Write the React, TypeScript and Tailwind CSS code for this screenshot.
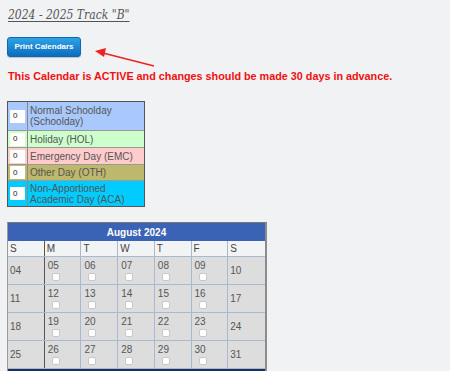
import React from "react";

const legend = [
  { label: ["Normal Schoolday", "(Schoolday)"], bg: "bg-[#a9c9fc]", h: "h-[28px]" },
  { label: ["Holiday (HOL)"], bg: "bg-[#ccffcc]", h: "h-[17px]" },
  { label: ["Emergency Day (EMC)"], bg: "bg-[#ffcccc]", h: "h-[17px]" },
  { label: ["Other Day (OTH)"], bg: "bg-[#bdb86b]", h: "h-[16px]" },
  { label: ["Non-Apportioned", "Academic Day (ACA)"], bg: "bg-[#00ccff]", h: "h-[26px]" },
];

const weeks = [
  ["04", "05", "06", "07", "08", "09", "10"],
  ["11", "12", "13", "14", "15", "16", "17"],
  ["18", "19", "20", "21", "22", "23", "24"],
  ["25", "26", "27", "28", "29", "30", "31"],
];

const dayNames = ["S", "M", "T", "W", "T", "F", "S"];

function colBorder(i: number) {
  if (i === 0) return "border-r border-r-[#555]";
  if (i === 6) return "";
  return "border-r border-r-[#a9b9cf]";
}

export default function App() {
  return (
    <div className="relative min-h-[371px] bg-[#f1f2f4] pl-[7px] pt-[5px] font-['Liberation_Sans',Arial,sans-serif] text-[#555]">
      {/* Title */}
      <h1 className="h-[20px] pl-[1px] font-['DejaVu_Serif_Condensed','DejaVu_Serif',serif] text-[12px] italic leading-[21px] text-[#555] underline underline-offset-2">
        2024 - 2025 Track "B"
      </h1>

      {/* Print button */}
      <button className="mt-[12px] h-[20px] w-[74px] rounded-[3px] border border-[#0b68b4] bg-gradient-to-b from-[#2fa3e6] to-[#0a6dbd] text-[8px] font-bold text-white shadow-[0_1px_1px_rgba(0,0,0,0.2)]">
        Print Calendars
      </button>

      {/* Notice */}
      <p className="mt-[13px] pl-[1px] text-[10.8px] font-bold leading-[13px] text-[#f01010]">
        This Calendar is ACTIVE and changes should be made 30 days in advance.
      </p>

      {/* Legend */}
      <div className="mt-[18px] w-[138px] border border-[#555]">
        {legend.map((row, i) => (
          <div key={i} className={`flex ${row.h} ${row.bg} ${i > 0 ? "border-t border-t-[#999]" : ""}`}>
            <div className="flex w-[20px] items-center justify-center border-r border-r-[#888]">
              <div className="flex h-[13px] w-[15px] items-center bg-white pl-[3px] text-[8px] text-[#222]">0</div>
            </div>
            <div className="flex flex-1 flex-col justify-center pl-[2px] text-[10px] leading-[11px] text-[#555]">
              {row.label.map((l) => (
                <span key={l}>{l}</span>
              ))}
            </div>
          </div>
        ))}
      </div>

      {/* Calendar */}
      <div className="mt-[15px] w-[260px] border-t border-l border-r-2 border-t-[#777] border-l-[#9a9a9a] border-r-[#8c8c8c]">
        <div className="flex h-[18px] items-center justify-center bg-[#3a63b5] text-[10px] font-bold text-white">
          August 2024
        </div>
        <div className="grid h-[16px] grid-cols-7 border-b border-b-[#a9b9cf] bg-[#f2f3f4]">
          {dayNames.map((d, i) => (
            <div key={i} className={`pl-[2px] text-[10px] leading-[15px] text-[#444] ${colBorder(i)}`}>
              {d}
            </div>
          ))}
        </div>
        {weeks.map((w, wi) => (
          <div key={wi} className="grid h-[28px] grid-cols-7 border-b border-b-[#a9b9cf] bg-[#dddddd]">
            {w.map((d, i) =>
              i === 0 || i === 6 ? (
                <div key={d} className={`flex items-center pl-[2px] text-[10px] ${colBorder(i)}`}>
                  {d}
                </div>
              ) : (
                <div key={d} className={`flex flex-col pl-[3px] pt-[3px] text-[10px] leading-[11px] ${colBorder(i)}`}>
                  <span>{d}</span>
                  <span className="ml-[4px] mt-[2px] h-[8px] w-[8px] rounded-[2px] border border-[#c8c8c8] bg-white" />
                </div>
              )
            )}
          </div>
        ))}
        <div className="h-[4px] bg-[#1d2f5c]" />
      </div>

      {/* Arrow */}
      <svg className="pointer-events-none absolute left-0 top-0" width="450" height="100" viewBox="0 0 450 100">
        <line x1="154" y1="66" x2="103" y2="53" stroke="#ee2222" strokeWidth="1.6" />
        <polygon points="95,51 106,48 104,57" fill="#ee2222" />
      </svg>
    </div>
  );
}
